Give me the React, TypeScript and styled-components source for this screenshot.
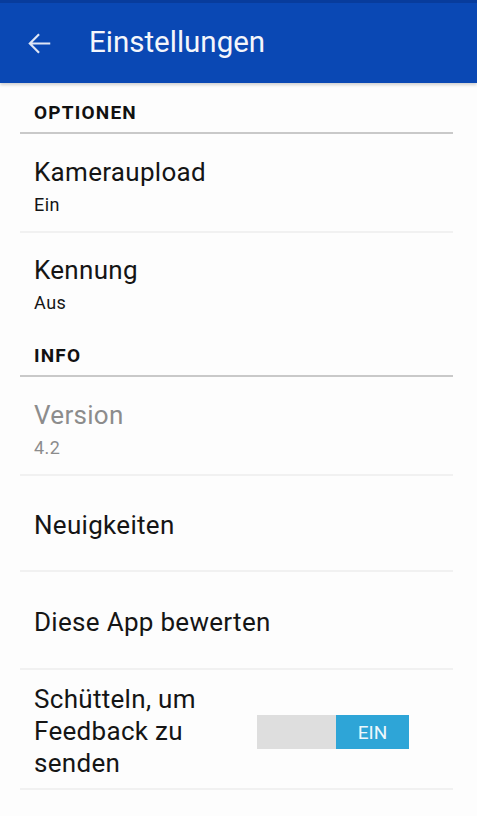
import React from "react";
import styled, { createGlobalStyle } from "styled-components";

const Global = createGlobalStyle`
  html, body { margin: 0; padding: 0; background: #fdfdfd; }
  body { font-family: Roboto, "Noto Sans", sans-serif; -webkit-font-smoothing: antialiased; }
  * { box-sizing: border-box; }
`;

const Screen = styled.div`
  width: 477px;
  min-height: 816px;
  background: #fdfdfd;
  display: flex;
  flex-direction: column;
`;

const Toolbar = styled.header`
  height: 83px;
  background: #0a48b4;
  border-top: 3px solid #083c9c;
  display: flex;
  align-items: center;
  padding-left: 25px;
  gap: 35px;
  box-shadow: 0 2px 3px rgba(0, 0, 0, 0.18);
  position: relative;
  z-index: 1;
`;

const Title = styled.h1`
  margin: 0;
  font-size: 29.5px;
  font-weight: 400;
  color: #f4f6fb;
  padding-bottom: 2px;
`;

const List = styled.main`
  display: flex;
  flex-direction: column;
  margin: 0 24px 0 20px;
`;

const SectionHeader = styled.div<{ $h: number }>`
  height: ${(p) => p.$h}px;
  display: flex;
  align-items: flex-end;
  padding: 0 0 8px 14px;
  font-size: 19px;
  font-weight: 700;
  letter-spacing: 1.2px;
  color: #111;
  border-bottom: 2px solid #c9c9c9;
`;

const Row = styled.div<{ $h: number; $divider?: boolean }>`
  height: ${(p) => p.$h}px;
  display: flex;
  align-items: center;
  justify-content: space-between;
  padding: 4px 44px 0 14px;
  border-bottom: ${(p) => (p.$divider ? "2px solid #f1f1f1" : "none")};
`;

const Texts = styled.div`
  display: flex;
  flex-direction: column;
  gap: 8px;
  padding-top: 4px;
`;

const Primary = styled.div<{ $dim?: boolean }>`
  font-size: 26px;
  letter-spacing: 0.3px;
  line-height: 28px;
  color: ${(p) => (p.$dim ? "#8c8c8c" : "#151515")};
`;

const Secondary = styled.div<{ $dim?: boolean }>`
  font-size: 18px;
  letter-spacing: 0.5px;
  line-height: 22px;
  color: ${(p) => (p.$dim ? "#8c8c8c" : "#151515")};
`;

const Multi = styled.div`
  font-size: 26px;
  letter-spacing: 0.3px;
  line-height: 32px;
  color: #151515;
  width: 200px;
`;

const Toggle = styled.div`
  width: 152px;
  height: 34px;
  display: flex;
  margin-top: 2px;
`;

const ToggleOff = styled.div`
  flex: 0 0 79px;
  background: #dedede;
`;

const ToggleOn = styled.div`
  flex: 1;
  background: #2ea5d7;
  color: #eef8fc;
  font-size: 19px;
  display: flex;
  align-items: center;
  justify-content: center;
`;

const BackArrow = () => (
  <svg width="29" height="29" viewBox="0 0 24 24" aria-hidden="true">
    <path
      d="M20 12H4.5M11 5l-7 7 7 7"
      fill="none"
      stroke="#dfe6f5"
      strokeWidth="1.8"
      strokeLinecap="square"
    />
  </svg>
);

export default function App() {
  return (
    <>
      <Global />
      <Screen>
        <Toolbar>
          <BackArrow />
          <Title>Einstellungen</Title>
        </Toolbar>
        <List>
          <SectionHeader $h={51}>OPTIONEN</SectionHeader>
          <Row $h={99} $divider>
            <Texts>
              <Primary>Kameraupload</Primary>
              <Secondary>Ein</Secondary>
            </Texts>
          </Row>
          <Row $h={95}>
            <Texts>
              <Primary>Kennung</Primary>
              <Secondary>Aus</Secondary>
            </Texts>
          </Row>
          <SectionHeader $h={49}>INFO</SectionHeader>
          <Row $h={99} $divider>
            <Texts>
              <Primary $dim>Version</Primary>
              <Secondary $dim>4.2</Secondary>
            </Texts>
          </Row>
          <Row $h={96} $divider>
            <Primary>Neuigkeiten</Primary>
          </Row>
          <Row $h={98} $divider>
            <Primary>Diese App bewerten</Primary>
          </Row>
          <Row $h={120} $divider>
            <Multi>Schütteln, um Feedback zu senden</Multi>
            <Toggle>
              <ToggleOff />
              <ToggleOn>EIN</ToggleOn>
            </Toggle>
          </Row>
        </List>
      </Screen>
    </>
  );
}
